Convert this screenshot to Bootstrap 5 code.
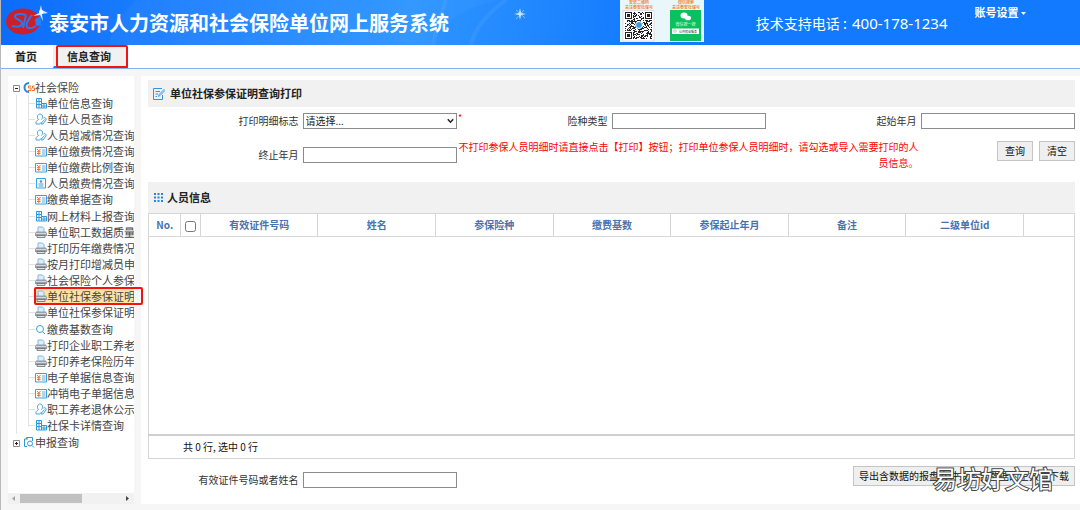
<!DOCTYPE html>
<html lang="zh-CN">
<head>
<meta charset="utf-8">
<meta name="viewport" content="width=device-width, initial-scale=1">
<title>泰安市人力资源和社会保险单位网上服务系统</title>
<link href="https://cdn.jsdelivr.net/npm/bootstrap@5.3.0/dist/css/bootstrap.min.css" rel="stylesheet">
<style>
body{font-family:"Noto Sans CJK SC",sans-serif;font-size:10px;line-height:16px;color:#333;background:#f6f6f6;min-height:100vh;border-left:1px solid #b9b9b9}
a{color:inherit;text-decoration:none}
.topbar{height:45px;background:linear-gradient(100deg,#0b6cfb 0%,#1f82ff 18%,#2d95ff 38%,#2389ff 48%,#117aff 60%,#117aff 100%);color:#fff;position:relative}
.sky{position:absolute;inset:0;width:560px;height:45px}
.topbar > .bar-item{position:relative}
.brand-logo{width:44px;height:36px;margin-left:4px}
.brand-title{font-size:20px;line-height:28px;font-weight:700;margin:0;flex:1}
.promo{width:84px;height:42px;margin-right:52px}
.hotline{font-size:14px;line-height:20px;margin-right:27px;white-space:nowrap}
.hotline span{font-family:"Noto Sans",sans-serif;font-size:15px;margin-left:2px}
.account{font-size:11px;line-height:16px;font-weight:700;border:0;background:none;color:#fff;padding:0;margin:4px 54px 0 0}
.tabs{height:24px;background:#fff;border-bottom:1px solid #7fb2f5}
.tabs a{font-size:11px;line-height:23px;font-weight:700;color:#222;padding-left:14px;width:52px}
.tabs a.on{width:75px;background:#f1f1f1;position:relative;border-left:1px solid #eee;padding-left:13px;border-bottom:2px solid #1b7cf0}
.hint{position:absolute;border:2px solid #f2150f;border-radius:2px;pointer-events:none}
.tabs .hint{left:2px;right:0;top:0;height:23px}
.page-body{padding-top:7px}
.side{width:126px;background:#fff;flex:none;margin:0 7px}
.tree,.tree ul{list-style:none;margin:0;padding:0}
.tree{padding-top:3px}
.node{display:flex;align-items:center;height:16px;font-size:11px;line-height:16px;color:#444;white-space:nowrap;overflow:hidden}
.node svg{width:12px;height:12px;flex:none}
.tree .root-node{padding-left:5px}
.tree .box{width:7px;height:7px;margin:2px 3px 0 0}
.kids{position:relative}
.kids li{position:relative;padding-left:27px}
.kids li::before{content:"";position:absolute;left:20px;top:0;bottom:0;width:7px;background:linear-gradient(#e2e2e2,#e2e2e2) 0 50%/7px 1px no-repeat,linear-gradient(#e2e2e2,#e2e2e2) 0 0/1px 100% no-repeat}
.kids li:last-child::before{bottom:8px;background-position:0 100%,0 0}
.kids li:nth-child(7n){padding-bottom:1px}
.kids::before{content:"";position:absolute;left:8px;top:0;bottom:0;border-left:1px solid #e2e2e2}
.node.on{background:#fde3a5}
.kids .hint{left:26px;right:-9px;top:-1px;height:18px}
.hscroll{height:11px;background:#f1f1f1}
.hscroll .thumb{width:62px;height:9px;background:#c1c1c1}
.hscroll svg{width:12px;height:9px}
.work{background:#fff;padding:4px 5px 16px 7px;min-width:0}
.sect{background:#f1f1f1;height:27px;font-size:11px;font-weight:700;color:#222;margin:0;padding-left:5px}
.sect svg{width:12px;height:12px;margin-right:5px}
.sect-grid{height:31px;margin-top:11px}
.sect-grid svg{width:11px;height:11px;margin-right:3px}
.query{display:grid;grid-template-columns:repeat(6,1fr);padding-top:6px}
.cell{grid-column:span 2;display:flex;align-items:center;justify-content:flex-end;position:relative;height:16px}
.cell label{margin-right:4px}
.box-in{width:50%;height:16px;border:1px solid #8b8b8b;border-radius:0;padding:0 2px;background:#fff;font-size:10px;line-height:14px;color:#222;appearance:none}
.pick{position:relative;width:50%;display:flex}
.pick .box-in{width:100%}
.pick svg{position:absolute;right:3px;top:5px;width:7px;height:6px;pointer-events:none}
.star{position:absolute;left:100%;top:-3px;margin-left:1px;color:#f00;font-size:9px}
.note{grid-column:3/span 3;color:#f00;text-align:right;margin:10px 2px 0 0}
.row-two{margin-top:18px}
.acts{margin-top:12px;gap:6px}
.btn-flat{font-size:10px;line-height:18px;height:20px;border:1px solid #c4c4c4;border-radius:0;background:#efefef;color:#111;padding:0 7px}
.btn-export{padding:0 5px}
.grid-table{width:100%;table-layout:fixed;border-collapse:collapse}
.grid-table th{height:23px;padding:0;border:1px solid #d6d6d6;text-align:center;vertical-align:middle;color:#4a72ae;font-weight:700;font-size:10px}
.grid-table td{height:198px;border:1px solid #d6d6d6;border-bottom:2px solid #cfcfcf;padding:0}
.grid-table input{width:11px;height:11px;margin:0;vertical-align:middle}
.sum{height:23px;border:1px solid #d6d6d6;border-top:0;padding-left:34px;line-height:22px;color:#111}
.foot{margin-top:7px;position:relative}
.foot .finder{width:33.3333%;margin-top:6px}
.wm{position:absolute;right:22px;top:-5px;font-size:24px;line-height:34px;color:#fff;-webkit-text-stroke:2px #444;paint-order:stroke fill;pointer-events:none;white-space:nowrap}
</style>
</head>
<body>
<svg width="0" height="0" class="position-absolute" aria-hidden="true">
<defs>
<symbol id="i-build" viewBox="0 0 12 12"><path d="M1.500 1.500h5v9.500h-5zM6.500 6.500h5v4.500h-5zM4 1.500V11M1.500 4.500h5M1.500 7.500h5M9 6.500V11M6.500 9h5" fill="none" stroke="#2f97d8"/></symbol>
<symbol id="i-user" viewBox="0 0 12 12"><path d="M3.500 6.500C1.500 4.500 2.500 1 5 1s3.500 3.500 1.500 5.500M3.500 6.500C1 8 .8 9 1 11h4M6 10.500 9.500 6.500M8.500 5c2-1 3 .5 2.500 2L8 11H6V9" fill="none" stroke="#48a6de"/></symbol>
<symbol id="i-yen" viewBox="0 0 12 12"><path d="M.5 2.500h11v8.500H.5z" fill="#fff" stroke="#3d9edb"/><path d="m2 4 1.800 2L5.500 4M3.800 6v4M2 6.700h3.500M2 8.500h3.500" fill="none" stroke="#f4732b"/><path d="M7 5h3.500M7 7h3.500M7 9h3.500" stroke="#58aee2"/></symbol>
<symbol id="i-card" viewBox="0 0 12 12"><path d="M1.500 1.500h9v9.500h-9z" fill="#fff" stroke="#3d9edb"/><circle cx="6" cy="4.500" r="1.300" fill="#3d9edb"/><path d="M3.500 7h5M3.500 9h5" stroke="#3d9edb"/></symbol>
<symbol id="i-print" viewBox="0 0 12 12"><path d="M3 6V1h4.500L9 2.500V6" fill="#dcefff" stroke="#7fb8e6"/><path d="M1 5.500h10l1 2v2.500H0V7.500z" fill="#989fa6"/><path d="M1 7.500h10" stroke="#d5d9dc"/><path d="M2 9.500h8v2H2z" fill="#dfe3e6" stroke="#666d73" stroke-width=".8"/></symbol>
<symbol id="i-find" viewBox="0 0 12 12"><circle cx="5" cy="6" r="3.500" fill="none" stroke="#3da0dc"/><path d="m7.500 8.500 2.500 2.500" stroke="#3da0dc"/></symbol>
</defs>
</svg>

<header class="topbar d-flex align-items-center">
  <svg class="sky" viewBox="0 0 560 45" preserveAspectRatio="none" aria-hidden="true">
    <path d="M135 0C120 15 110 30 108 45H430C440 20 470 5 500 0z" fill="#fff" opacity=".03"/>
    <path d="M445 0Q436 25 432 45M505 0Q475 22 470 45" fill="none" stroke="#8cc8ff" stroke-width="4" opacity=".12"/>
    <path d="M519 8l1 5 5 1-5 1-1 5-1-5-5-1 5-1z" fill="#d5ecff"/><path d="M515 10l9 8M523 10l-8 9" stroke="#b9dcff" stroke-width=".6"/>
  </svg>
  <svg class="brand-logo bar-item" viewBox="0 0 44 36" aria-hidden="true">
    <ellipse cx="18" cy="16.500" rx="17" ry="13" fill="#c9202b"/>
    <path d="m30 14 6-3v9l-5 1z" fill="#2380fb"/>
    <path d="M21 10c-5-2-12-1-11 2 1 3 8 3 7 7-1 3-6 3-10 2M27 10c-3 3-7 10-5 12 2 2 6 1 9-1M21 10l-3 13" fill="none" stroke="#2a78ed" stroke-width="2"/>
    <path d="M36 0l1 5 6 3-6 1 1 7-3-6-7 1 6-3z" fill="#cce8ff"/><circle cx="36" cy="7" r="2" fill="#fff"/>
  </svg>
  <h1 class="brand-title bar-item">泰安市人力资源和社会保险单位网上服务系统</h1>
  <svg class="promo bar-item align-self-start" viewBox="0 0 84 42">
    <path d="M0 0h84v42H0z" fill="#e9f7fb"/>
    <g fill="#f28a35" font-size="4" font-weight="700" text-anchor="middle"><text x="19" y="4">安装二维码</text><text x="19" y="9">关注泰安社保号</text><text x="66" y="4">微信搜索</text><text x="66" y="9">关注泰安社保号</text></g>
    <path d="M3 10.500h31v30.500H3z" fill="#fff" stroke="#ccc" stroke-width=".6"/>
    <g id="qr" fill="#222"></g>
    <circle cx="19" cy="25" r="3.500" fill="#3d98e8" stroke="#fff"/>
    <path d="M50 10h31v31H50z" fill="#0bc15f"/>
    <ellipse cx="64" cy="15.500" rx="3.500" ry="3" fill="#fff"/><ellipse cx="68" cy="18" rx="3" ry="2.300" fill="#fff"/>
    <text x="65.500" y="26" font-size="4" fill="#d9ffe8" text-anchor="middle">微信搜一搜</text>
    <path d="M52 28.500h27v5.500H52z" fill="#fff"/><circle cx="55" cy="31" r="1.300" fill="none" stroke="#999" stroke-width=".5"/>
    <text x="68" y="33" font-size="3" fill="#222" text-anchor="middle">公共就业服务</text>
  </svg>
  <div class="hotline bar-item">技术支持电话 : <span>400-178-1234</span></div>
  <button type="button" class="account bar-item align-self-start text-nowrap">账号设置 <svg width="5" height="4" viewBox="0 0 5 4"><path d="M0 0h5L2.500 3z" fill="#fff"/></svg></button>
</header>

<nav class="tabs d-flex" aria-label="主菜单">
  <a href="#">首页</a>
  <a href="#" class="on">信息查询<span class="hint"></span></a>
</nav>

<div class="page-body d-flex">
  <aside class="side d-flex flex-column">
    <ul class="tree flex-grow-1">
      <li>
        <a href="#" class="node root-node"><svg class="box" viewBox="0 0 7 7"><path d="M.5.5h6v6h-6z" fill="#fff" stroke="#8c8c8c"/><path d="M2 3.500h3" stroke="#222"/></svg><svg viewBox="0 0 12 12"><path d="M6 2a4.500 4.500 0 1 0 0 9" fill="none" stroke="#2389e8" stroke-width="2"/><path d="M8 5H5.500v2H8v2.500H5M11.500 5H9.500v2h2v2.500H9" fill="none" stroke="#f4732b"/></svg>社会保险</a>
        <ul class="kids">
          <li><a href="#" class="node"><svg><use href="#i-build"/></svg>单位信息查询</a></li>
          <li><a href="#" class="node"><svg><use href="#i-user"/></svg>单位人员查询</a></li>
          <li><a href="#" class="node"><svg><use href="#i-user"/></svg>人员增减情况查询</a></li>
          <li><a href="#" class="node"><svg><use href="#i-yen"/></svg>单位缴费情况查询</a></li>
          <li><a href="#" class="node"><svg><use href="#i-yen"/></svg>单位缴费比例查询</a></li>
          <li><a href="#" class="node"><svg><use href="#i-card"/></svg>人员缴费情况查询</a></li>
          <li><a href="#" class="node"><svg><use href="#i-yen"/></svg>缴费单据查询</a></li>
          <li><a href="#" class="node"><svg><use href="#i-build"/></svg>网上材料上报查询</a></li>
          <li><a href="#" class="node"><svg><use href="#i-print"/></svg>单位职工数据质量报告</a></li>
          <li><a href="#" class="node"><svg><use href="#i-print"/></svg>打印历年缴费情况</a></li>
          <li><a href="#" class="node"><svg><use href="#i-print"/></svg>按月打印增减员申报表</a></li>
          <li><a href="#" class="node"><svg><use href="#i-print"/></svg>社会保险个人参保证明</a></li>
          <li><a href="#" class="node on"><svg><use href="#i-print"/></svg>单位社保参保证明查询打印</a><span class="hint"></span></li>
          <li><a href="#" class="node"><svg><use href="#i-print"/></svg>单位社保参保证明查询</a></li>
          <li><a href="#" class="node"><svg><use href="#i-find"/></svg>缴费基数查询</a></li>
          <li><a href="#" class="node"><svg><use href="#i-print"/></svg>打印企业职工养老账户</a></li>
          <li><a href="#" class="node"><svg><use href="#i-print"/></svg>打印养老保险历年缴费</a></li>
          <li><a href="#" class="node"><svg><use href="#i-yen"/></svg>电子单据信息查询</a></li>
          <li><a href="#" class="node"><svg><use href="#i-yen"/></svg>冲销电子单据信息查询</a></li>
          <li><a href="#" class="node"><svg><use href="#i-user"/></svg>职工养老退休公示名单</a></li>
          <li><a href="#" class="node"><svg><use href="#i-build"/></svg>社保卡详情查询</a></li>
        </ul>
      </li>
      <li><a href="#" class="node root-node"><svg class="box" viewBox="0 0 7 7"><path d="M.5.5h6v6h-6z" fill="#fff" stroke="#8c8c8c"/><path d="M2 3.500h3M3.500 2v3" stroke="#222"/></svg><svg viewBox="0 0 12 12"><path d="M3.500 3V1.500h6V5M4 10.500H1.500V3H5" fill="none" stroke="#2f97d8"/><circle cx="7" cy="7.500" r="2.500" fill="none" stroke="#2f97d8"/><path d="m9 9.500 2 2" stroke="#2f97d8"/></svg>申报查询</a></li>
    </ul>
    <div class="hscroll d-flex align-items-center"><svg viewBox="0 0 12 9"><path d="M7 2v5L4 4.500z" fill="#a3a3a3"/></svg><span class="thumb"></span><svg class="ms-auto" viewBox="0 0 12 9"><path d="M4 2v5l3-2.500z" fill="#444"/></svg></div>
  </aside>

  <main class="work flex-grow-1">
    <h2 class="sect d-flex align-items-center"><svg viewBox="0 0 12 12"><path d="M9.500 7v4.500h-9V.5H9" fill="none" stroke="#3292e0"/><path d="M2.500 3.500H7M2.500 6H5M2.500 8.500H4" stroke="#3292e0"/><path d="m5.500 8.500.5-2 5-5 1 1-5 5z" fill="#bfe0fa" stroke="#3292e0" stroke-width=".8"/></svg>单位社保参保证明查询打印</h2>
    <form>
      <div class="query">
        <div class="cell"><label for="flag">打印明细标志</label><div class="pick"><select id="flag" class="box-in"><option>请选择...</option></select><svg viewBox="0 0 7 6"><path d="m.8 1.200 2.700 3 2.700-3" fill="none" stroke="#222" stroke-width="1.500"/></svg><span class="star">*</span></div></div>
        <div class="cell"><label for="kind">险种类型</label><input id="kind" class="box-in" type="text"></div>
        <div class="cell"><label for="from">起始年月</label><input id="from" class="box-in" type="text"></div>
        <div class="cell row-two"><label for="to">终止年月</label><input id="to" class="box-in" type="text"></div>
        <p class="note">不打印参保人员明细时请直接点击【打印】按钮；打印单位参保人员明细时，请勾选或导入需要打印的人员信息。</p>
        <div class="acts d-flex justify-content-end align-items-start"><button type="button" class="btn btn-flat">查询</button><button type="reset" class="btn btn-flat">清空</button></div>
      </div>
    </form>
    <h2 class="sect sect-grid d-flex align-items-center"><svg viewBox="0 0 11 11"><path d="M1 2h9M1 5.500h9M1 9h9" stroke="#2585e0" stroke-width="2" stroke-dasharray="2 1.500"/></svg>人员信息</h2>
    <table class="grid-table">
      <colgroup><col style="width:3.5%"><col style="width:2.1%"><col span="7" style="width:12.7%"><col></colgroup>
      <thead><tr><th>No.</th><th><input type="checkbox" aria-label="全选"></th><th>有效证件号码</th><th>姓名</th><th>参保险种</th><th>缴费基数</th><th>参保起止年月</th><th>备注</th><th>二级单位id</th><th></th></tr></thead>
      <tbody><tr><td colspan="10"></td></tr></tbody>
    </table>
    <div class="sum">共 0 行, 选中 0 行</div>
    <div class="foot d-flex justify-content-between align-items-start">
      <div class="finder cell"><label for="who">有效证件号码或者姓名</label><input id="who" class="box-in" type="text"></div>
      <button type="button" class="btn btn-flat btn-export text-nowrap">导出含数据的报盘文件或不含数据的空报盘下载</button>
      <span class="wm">易坊好文馆</span>
    </div>
  </main>
</div>
<script src="https://cdn.jsdelivr.net/npm/bootstrap@5.3.0/dist/js/bootstrap.bundle.min.js"></script>
<script>
// QR-style module grid, 27 cells a side, with three finder squares
(function(){
  var n=27,s='',seed=7;
  function finder(x,y){
    return '<path fill="#222" d="M'+x+' '+y+'h7v7h-7z"/><path fill="#fff" d="M'+(x+1)+' '+(y+1)+'h5v5h-5z"/><path fill="#222" d="M'+(x+2)+' '+(y+2)+'h3v3h-3z"/>';
  }
  for(var y=0;y<n;y++)for(var x=0;x<n;x++){
    seed=(seed*16807)%2147483647;
    if((x<8&&y<8)||(x>18&&y<8)||(x<8&&y>18))continue;
    if(seed/2147483647<0.55)s+='M'+(x+5)+' '+(y+12)+'h1v1h-1z';
  }
  document.getElementById('qr').innerHTML='<path d="'+s+'"/>'+finder(5,12)+finder(25,12)+finder(5,32);
})();
</script>
</body>
</html>
